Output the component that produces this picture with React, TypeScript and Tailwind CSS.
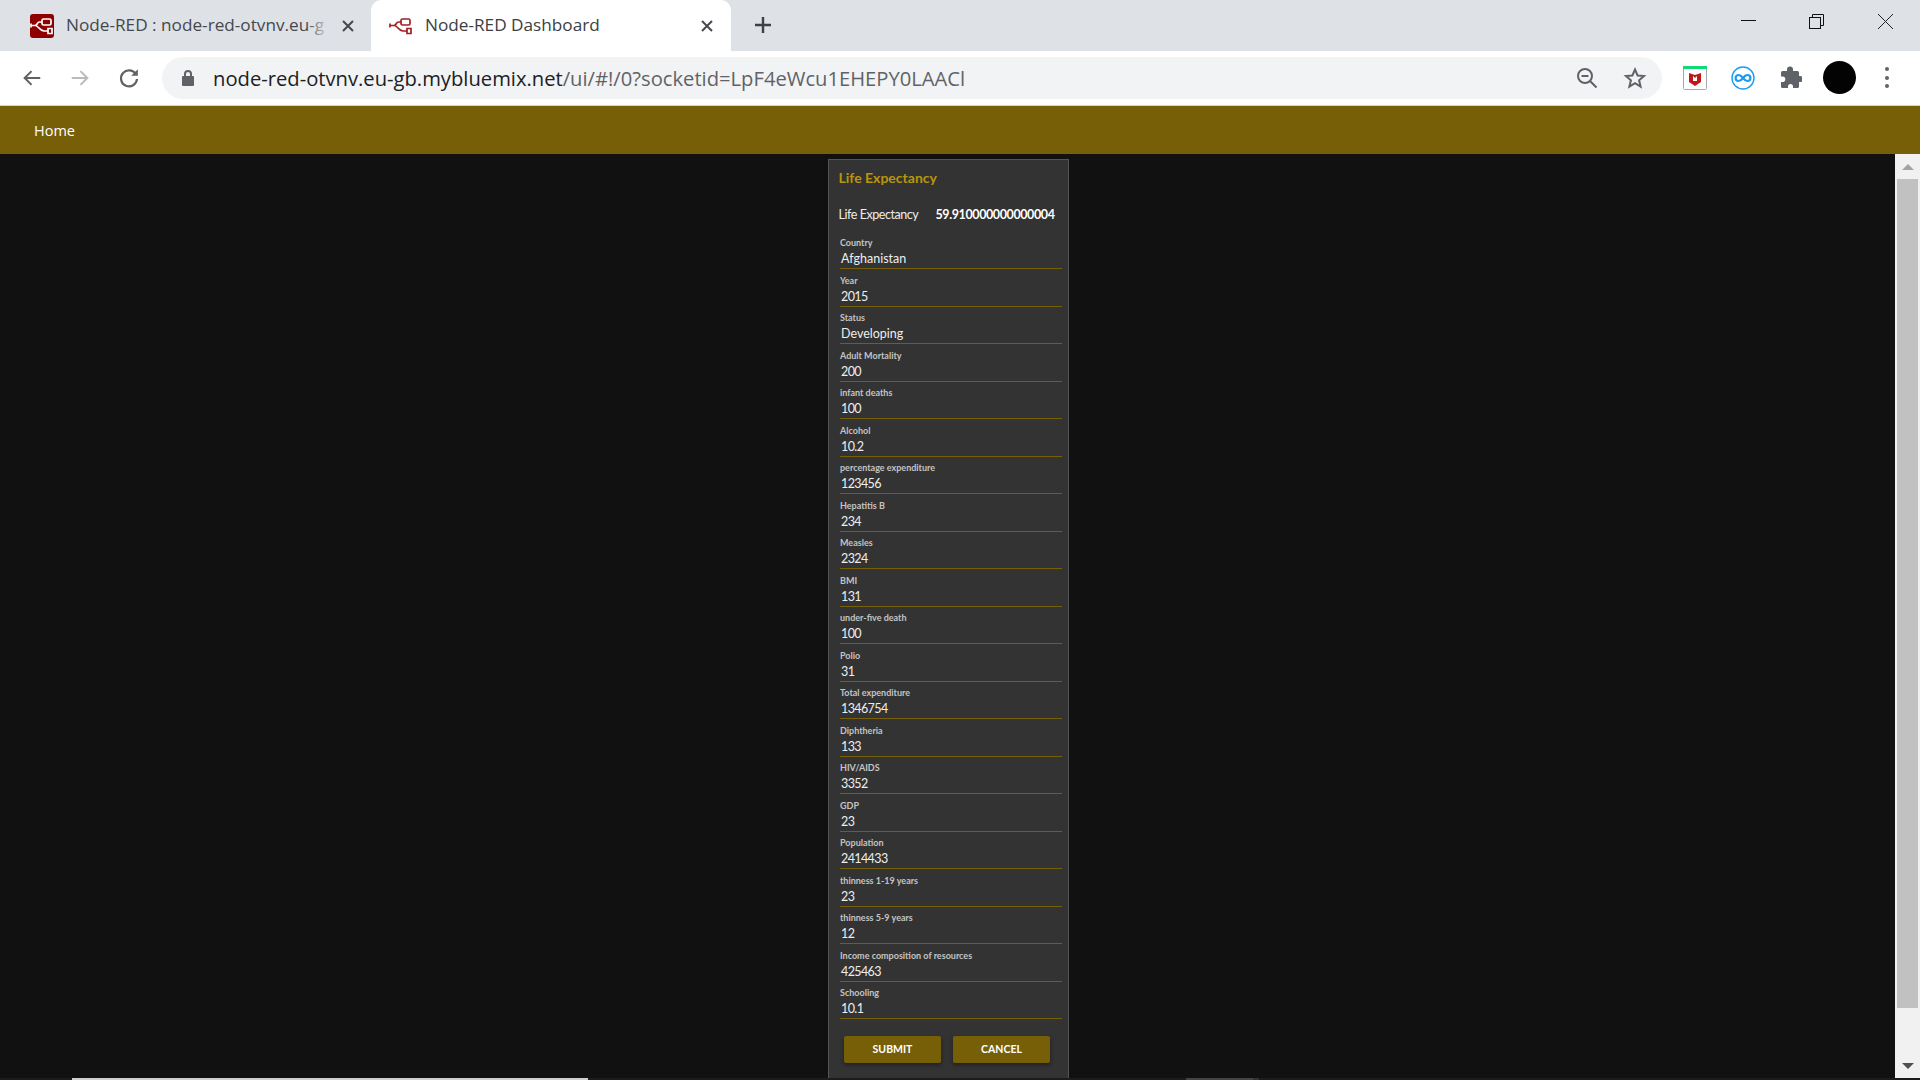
const FONT = "font-['Open_Sans','Noto_Sans',sans-serif]";
const CARD_FONT = "font-['Lato','Open_Sans',sans-serif]";

const fields: [string, string][] = [
  ["Country", "Afghanistan"],
  ["Year", "2015"],
  ["Status", "Developing"],
  ["Adult Mortality", "200"],
  ["infant deaths", "100"],
  ["Alcohol", "10.2"],
  ["percentage expenditure", "123456"],
  ["Hepatitis B", "234"],
  ["Measles", "2324"],
  ["BMI", "131"],
  ["under-five death", "100"],
  ["Polio", "31"],
  ["Total expenditure", "1346754"],
  ["Diphtheria", "133"],
  ["HIV/AIDS", "3352"],
  ["GDP", "23"],
  ["Population", "2414433"],
  ["thinness 1-19 years", "23"],
  ["thinness 5-9 years", "12"],
  ["Income composition of resources", "425463"],
  ["Schooling", "10.1"],
];

function NodeRedGlyph({ color, bg }: { color: string; bg?: string }) {
  return (
    <svg viewBox="0 0 24 24" className="w-full h-full" fill="none">
      {bg && <rect width="24" height="24" rx="3" fill={bg} />}
      <g stroke={color} strokeWidth="1.7" fill="none">
        <rect x="12" y="5" width="9" height="6" rx="1.5" />
        <path d="M12 8H9.500C7 8 7.500 11.500 5 11.500H1" />
        <path d="M1 9.500v4" />
        <path d="M5.500 11.500C8 11.500 10 17 14 17H18" />
        <path d="M18 14.500h4v5h-4z" />
      </g>
    </svg>
  );
}

function CloseX({ className = "" }: { className?: string }) {
  return (
    <svg viewBox="0 0 14 14" className={`w-[14px] h-[14px] ${className}`} fill="none" stroke="#45484d" strokeWidth="2">
      <path d="M2 2l10 10M12 2L2 12" />
    </svg>
  );
}

function TabStrip() {
  return (
    <div className={`h-[51px] bg-[#dee1e6] flex items-stretch shrink-0 ${FONT}`}>
      <div className="w-[371px] flex items-center pl-[30px] shrink-0">
        <div className="w-[24px] h-[24px] shrink-0">
          <NodeRedGlyph color="#fff" bg="#8f0000" />
        </div>
        <div className="relative ml-[12px] w-[264px] overflow-hidden whitespace-nowrap text-[17.200px] leading-[24px] -mt-[2px] text-[#45484d]">
          Node-RED : node-red-otvnv.eu-g
          <div className="absolute right-0 top-0 bottom-0 w-[24px] bg-gradient-to-r from-transparent to-[#dee1e6]" />
        </div>
        <CloseX className="ml-[11px] shrink-0" />
      </div>
      <div className="w-[360px] bg-white rounded-t-[10px] flex items-center pl-[18px] shrink-0">
        <div className="w-[24px] h-[24px] shrink-0">
          <NodeRedGlyph color="#a11e22" />
        </div>
        <div className="ml-[12px] w-[275px] whitespace-nowrap text-[17.200px] leading-[24px] -mt-[2px] text-[#3c4043]">Node-RED Dashboard</div>
        <CloseX className="shrink-0" />
      </div>
      <div className="flex items-center ml-[23px] -mt-[2px]">
        <svg viewBox="0 0 18 18" className="w-[18px] h-[18px]" stroke="#3c4043" strokeWidth="2.400">
          <path d="M9 1v16M1 9h16" />
        </svg>
      </div>
      <div className="ml-auto flex items-start pt-[14px] pr-[27px] gap-[53px]">
        <svg viewBox="0 0 15 15" className="w-[15px] h-[15px]" stroke="#111" strokeWidth="1">
          <path d="M0 6.500h15" />
        </svg>
        <svg viewBox="0 0 15 15" className="w-[15px] h-[15px]" stroke="#111" strokeWidth="1" fill="none">
          <rect x="0.500" y="3.500" width="11" height="11" />
          <path d="M3.500 3.500V0.500H14.500V11.500H11.500" />
        </svg>
        <svg viewBox="0 0 15 15" className="w-[15px] h-[15px] ml-[1px]" stroke="#222" strokeWidth="1" fill="none">
          <path d="M0 0l15 15M15 0L0 15" />
        </svg>
      </div>
    </div>
  );
}

function Toolbar() {
  return (
    <div className={`h-[55px] bg-white border-b border-[#d4d4d4] flex items-center shrink-0 pb-px ${FONT}`}>
      <div className="flex items-center pl-[21px] gap-[26px] w-[162px] shrink-0">
        <svg viewBox="0 0 24 24" className="w-[22px] h-[22px]" fill="none" stroke="#5f6368" strokeWidth="2.200">
          <path d="M21 12H4M11.500 4.500L4 12l7.500 7.500" />
        </svg>
        <svg viewBox="0 0 24 24" className="w-[22px] h-[22px]" fill="none" stroke="#b9bbbe" strokeWidth="2.200">
          <path d="M3 12h17M12.500 4.500L20 12l-7.500 7.500" />
        </svg>
        <svg viewBox="0 0 24 24" className="w-[24px] h-[24px]" fill="none" stroke="#5f6368" strokeWidth="2.200">
          <path d="M19 8.500A8 8 0 1 0 20 13" />
          <path d="M20.800 3.200v6.600h-6.600z" fill="#5f6368" stroke="none" />
        </svg>
      </div>
      <div className="w-[1500px] h-[42px] rounded-full bg-[#f1f3f4] flex items-center pl-[19px] pr-[15px] shrink-0">
        <svg viewBox="0 0 14 18" className="w-[14px] h-[18px] shrink-0" fill="#5f6368">
          <path d="M2 7h1V5a4 4 0 0 1 8 0v2h1a1 1 0 0 1 1 1v8a1 1 0 0 1-1 1H2a1 1 0 0 1-1-1V8a1 1 0 0 1 1-1zm3 0h4V5a2 2 0 0 0-4 0z" />
        </svg>
        <div className="ml-[18px] pt-[1px] text-[20.200px] whitespace-nowrap text-[#202124]">
          node-red-otvnv.eu-gb.mybluemix.net<span className="text-[#5f6368]">/ui/#!/0?socketid=LpF4eWcu1EHEPY0LAACl</span>
        </div>
        <div className="ml-auto flex items-center gap-[24px]">
          <svg viewBox="0 0 24 24" className="w-[24px] h-[24px]" fill="none" stroke="#5f6368" strokeWidth="2">
            <circle cx="10" cy="10" r="7" />
            <path d="M6.500 10h7M15 15l6.500 6.500" />
          </svg>
          <svg viewBox="0 0 24 24" className="w-[24px] h-[24px]" fill="none" stroke="#5f6368" strokeWidth="2">
            <path d="M12 3.500l2.600 6 6.400.6-4.900 4.200 1.500 6.300L12 17.200l-5.600 3.400 1.500-6.300L3 10.100l6.400-.6z" />
          </svg>
        </div>
      </div>
      <div className="flex items-center pl-[21px] gap-[24px]">
        <svg viewBox="0 0 24 24" className="w-[24px] h-[24px]">
          <rect x="0.500" y="0.500" width="23" height="23" rx="1" fill="#fff" stroke="#a8a8a8" />
          <rect width="24" height="3" fill="#12d878" />
          <path d="M6 7l3 1 3 1 3-1 3-1v9l-6 4-6-4z" fill="#c01818" />
          <path d="M10 10l2 2 2-2v5h-4z" fill="#fff" />
        </svg>
        <svg viewBox="0 0 24 24" className="w-[24px] h-[24px]" fill="none" stroke="#1a9cf0">
          <circle cx="12" cy="12" r="11" strokeWidth="1.400" />
          <path d="M12 12c-1.500-2-2.800-3-4.400-3a3 3 0 0 0 0 6c1.600 0 2.900-1 4.400-3s2.800-3 4.400-3a3 3 0 0 1 0 6c-1.600 0-2.900-1-4.400-3z" strokeWidth="2.200" />
        </svg>
        <svg viewBox="0 0 24 24" className="w-[24px] h-[24px] -ml-[1px]" fill="#5f6368">
          <path d="M9 3.500a3 3 0 0 1 6 0V5h4.500A1.500 1.500 0 0 1 21 6.500V10h1a3 3 0 0 1 0 6h-1v4.500a1.500 1.500 0 0 1-1.500 1.500H15v-1.500a2.500 2.500 0 0 0-5 0V22H4.500A1.500 1.500 0 0 1 3 20.500V16h1.500a2.800 2.800 0 0 0 0-5.600H3V6.500A1.500 1.500 0 0 1 4.500 5H9z" />
        </svg>
        <div className="w-[33px] h-[33px] rounded-full bg-[#030304] -ml-[3px] -mr-[4px]" />
        <div className="flex flex-col gap-[4.500px] ml-[9px]">
          <div className="w-[4px] h-[4px] rounded-full bg-[#5f6368]" />
          <div className="w-[4px] h-[4px] rounded-full bg-[#5f6368]" />
          <div className="w-[4px] h-[4px] rounded-full bg-[#5f6368]" />
        </div>
      </div>
    </div>
  );
}

function Field({ label, value }: { label: string; value: string }) {
  const numeric = /^[0-9.]+$/.test(value);
  return (
    <div className="h-[37.500px] flex flex-col justify-end border-b border-[#775f08] shrink-0">
      <div className="text-[9px] font-bold leading-[12px] pb-[1px] text-[#c4c4c4] whitespace-nowrap">{label}</div>
      <div className={`text-[12.500px] leading-[18px] pl-px text-[#eee] whitespace-nowrap ${numeric ? "tracking-[-0.6px]" : ""}`}>{value}</div>
    </div>
  );
}

function Card() {
  return (
    <div className={`w-[241px] ml-[828px] mt-[5px] bg-[#333] border border-[#555] border-b-0 flex flex-col h-[919px] shrink-0 ${CARD_FONT}`}>
      <div className="pl-[9.500px] pt-[9px] h-[40px] text-[14px] font-bold leading-[18px] text-[#b8960c]">Life Expectancy</div>
      <div className="pl-[9.500px] pt-[6px] h-[31.500px] flex text-[12.500px] leading-[18px] text-[#eee] whitespace-nowrap">
        <span className="w-[97px] tracking-[-0.45px]">Life Expectancy</span>
        <span className="font-bold text-white tracking-[-0.4px]">59.910000000000004</span>
      </div>
      <div className="ml-[11px] w-[222px]">
        {fields.map(([l, v]) => (
          <Field key={l} label={l} value={v} />
        ))}
      </div>
      <div className="flex gap-[12px] ml-[15px] mt-[16.500px]">
        <button className="w-[97px] h-[27px] pt-[1px] rounded-[2px] bg-[#775f08] text-white text-[10.500px] font-bold shadow-[0_2px_4px_rgba(0,0,0,0.4)]">SUBMIT</button>
        <button className="w-[97px] h-[27px] pt-[1px] rounded-[2px] bg-[#775f08] text-white text-[10.500px] font-bold shadow-[0_2px_4px_rgba(0,0,0,0.4)]">CANCEL</button>
      </div>
    </div>
  );
}

function Scrollbar() {
  return (
    <div className="w-[25px] bg-[#f1f1f1] flex flex-col items-center shrink-0">
      <div className="h-[25px] flex items-center justify-center shrink-0">
        <svg viewBox="0 0 12 6" className="w-[12px] h-[6px]" fill="#a3a3a3"><path d="M6 0l6 6H0z" /></svg>
      </div>
      <div className="w-[21px] h-[829px] bg-[#c1c1c1]" />
      <div className="mt-auto h-[25px] flex items-center justify-center shrink-0">
        <svg viewBox="0 0 12 6" className="w-[12px] h-[6px]" fill="#505050"><path d="M6 6l6-6H0z" /></svg>
      </div>
    </div>
  );
}

export default function App() {
  return (
    <div className="w-[1920px] h-[1080px] flex flex-col overflow-hidden bg-[#111]">
      <TabStrip />
      <Toolbar />
      <div className={`h-[48px] bg-[#775f08] flex items-center pl-[34px] pt-[2px] text-[14.500px] text-white shrink-0 ${FONT}`}>Home</div>
      <div className="h-[924px] flex shrink-0 overflow-hidden">
        <div className="flex-1 overflow-hidden">
          <Card />
        </div>
        <Scrollbar />
      </div>
      <div className="h-[2px] bg-[#1c1c1c] flex shrink-0">
        <div className="w-[516px] ml-[72px] bg-[#cfcfcf]" />
        <div className="w-[67px] ml-[598px] bg-[#444]" />
        <div className="w-[6px] bg-[#333]" />
      </div>
    </div>
  );
}
